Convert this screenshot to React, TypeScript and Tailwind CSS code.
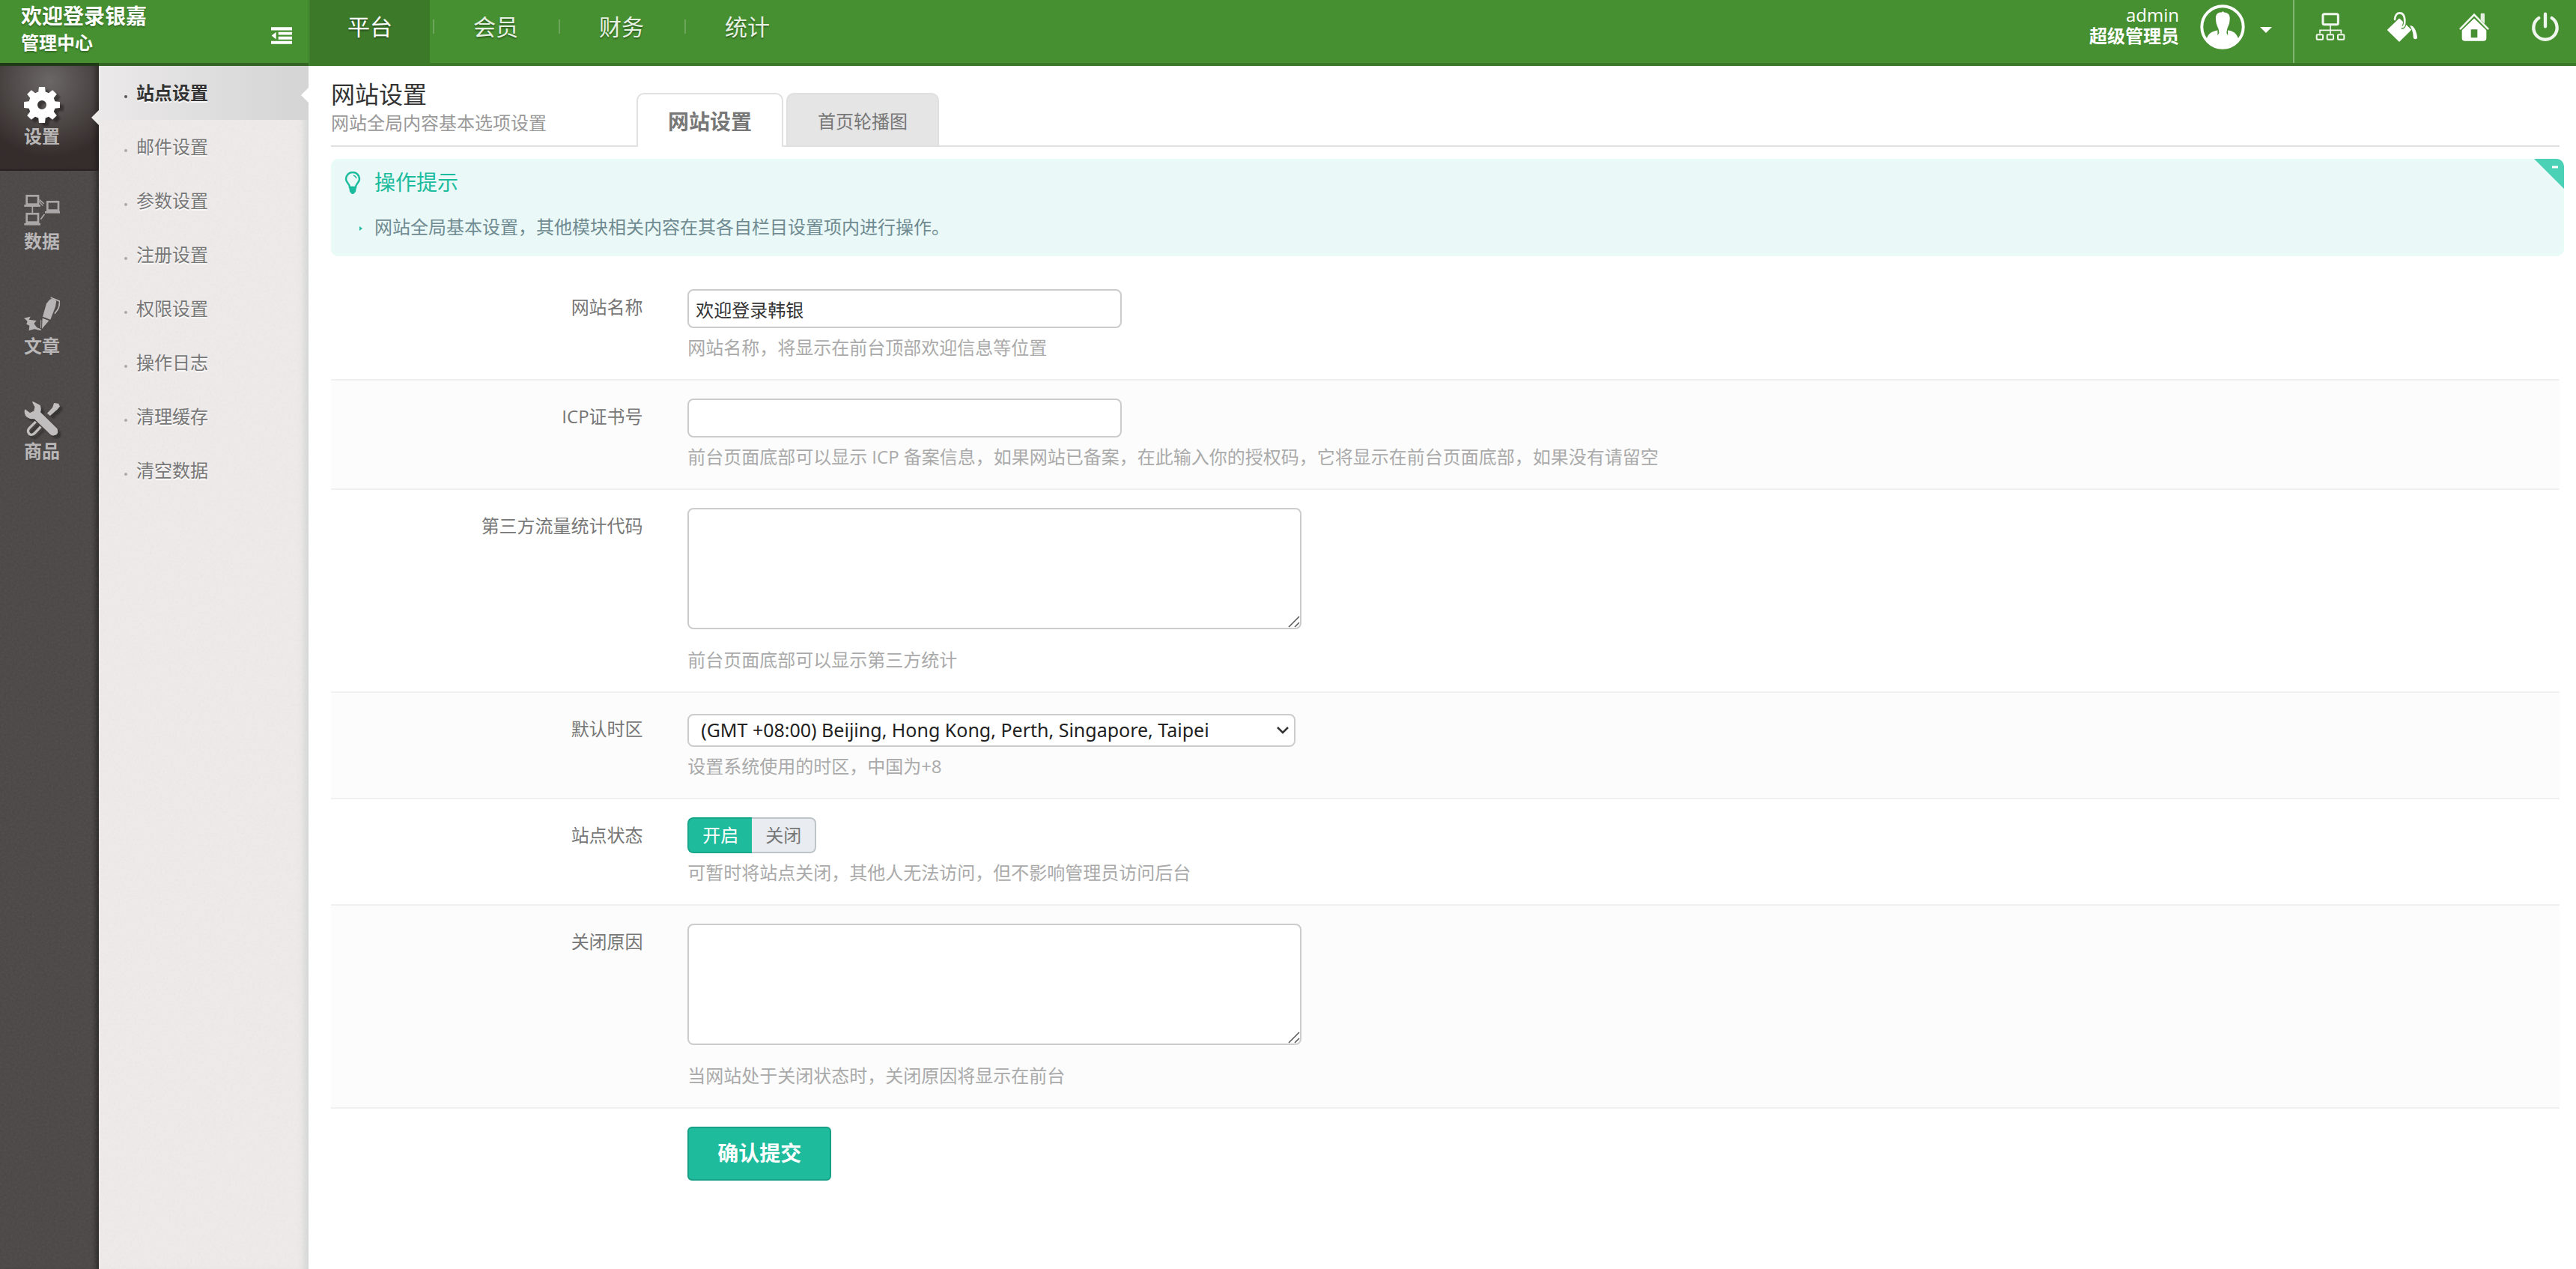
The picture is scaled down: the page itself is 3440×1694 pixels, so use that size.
import { useState } from "react";
import type { ReactNode } from "react";

function CollapseIcon() {
  return (
    <svg viewBox="0 0 84 68" className="h-[23px] w-7" fill="#fff" aria-hidden="true">
      <path d="M0 0H84V13H0ZM29 20H84V31H29ZM29 38H84V50H29ZM0 56H84V68H0ZM2 34L20 20V49Z" />
    </svg>
  );
}

function AvatarIcon() {
  return (
    <svg viewBox="53 17 182 182" className="size-[60px]" aria-hidden="true">
      <clipPath id="avatar-clip">
        <circle cx="144" cy="108" r="80" />
      </clipPath>
      <circle cx="144" cy="108" r="84" fill="none" stroke="#fff" strokeWidth="12" />
      <path
        clipPath="url(#avatar-clip)"
        fill="#fff"
        d="M117 80C114 58 124 48 140 49L146 44L150 49C166 50 176 58 173 80C172 100 165 106 162 120L160 132L166 142L165 122C184 124 200 130 210 160V200H78V160C86 132 104 126 124 122V142L130 132L128 118C124 106 118 98 117 80Z"
      />
    </svg>
  );
}

function SitemapIcon() {
  return (
    <svg viewBox="519 50 120 120" className="size-10" fill="none" stroke="#f2f7f0" aria-hidden="true">
      <rect x="549" y="58" width="61" height="42" rx="6" strokeWidth="9" />
      <path d="M579 103V138M537 136V123H622V136" strokeWidth="5" />
      <rect x="524" y="141" width="25" height="19" rx="3" strokeWidth="6" />
      <rect x="566" y="141" width="25" height="19" rx="3" strokeWidth="6" />
      <rect x="609" y="141" width="25" height="19" rx="3" strokeWidth="6" />
    </svg>
  );
}

function PaintIcon() {
  return (
    <svg viewBox="804 48 120 120" className="size-10" aria-hidden="true">
      <path d="M852 76L898 119L852 165L806 120Z" fill="#fff" stroke="#fff" strokeWidth="4" strokeLinejoin="round" />
      <path d="M833 82C834 58 843 51 854 51C870 51 874 66 874 86C874 100 870 110 861 109" fill="none" stroke="#469031" strokeWidth="14" />
      <path d="M834 78C836 58 844 52 854 52C870 52 874 66 874 86C874 100 870 110 861 107C858 105 859 100 860 96" fill="none" stroke="#f2f7f0" strokeWidth="8" strokeLinecap="round" />
      <path d="M894 103C910 101 920 120 924 148Q925 156 917 157Q908 157 908 147Q908 124 894 103Z" fill="#fff" />
    </svg>
  );
}

function HomeIcon() {
  return (
    <svg viewBox="1092 52 120 120" className="size-10" aria-hidden="true">
      <rect x="1178" y="57" width="16" height="46" rx="3" fill="#e4efe0" />
      <path d="M1103 121L1152 76L1201 121V156Q1201 168 1189 168H1115Q1103 168 1103 156ZM1139 122V155H1165V122Z" fill="#fff" fillRule="evenodd" />
      <path d="M1094 124L1152 68L1210 124" fill="none" stroke="#469031" strokeWidth="14" />
      <path d="M1097 119L1152 63L1207 119" fill="none" stroke="#f2f7f0" strokeWidth="8" strokeLinecap="round" />
    </svg>
  );
}

function PowerIcon() {
  return (
    <svg viewBox="1380 52 120 120" className="size-10" fill="none" stroke="#eff6ed" strokeWidth="13" strokeLinecap="round" aria-hidden="true">
      <path d="M1414 76A47 47 0 1 0 1466 76M1440 60V110" />
    </svg>
  );
}

function GearIcon() {
  return (
    <svg viewBox="0 0 48 48" className="size-12 drop-shadow-[5px_4px_1px_rgba(0,0,0,0.35)]" aria-hidden="true">
      <circle cx="24" cy="24" r="12" fill="none" stroke="#fff" strokeWidth="12" />
      <g fill="#fff">
        {[0, 45, 90, 135, 180, 225, 270, 315].map((a) => (
          <path key={a} d="M20 0H28L29 9H19Z" transform={`rotate(${a} 24 24)`} />
        ))}
      </g>
    </svg>
  );
}

function DataIcon() {
  return (
    <svg viewBox="96 774 144 144" className="size-12" fill="none" stroke="#a9a7a7" strokeWidth="8" aria-hidden="true">
      <rect x="107" y="790" width="46" height="34" />
      <rect x="190" y="814" width="44" height="34" />
      <rect x="107" y="862" width="46" height="34" />
      <path d="M97 830H162M180 856H241M97 904H162" strokeWidth="8" />
      <path d="M130 834V858M158 806L176 822M163 884L178 864" strokeWidth="5" />
      <path d="M156 812L172 830" strokeWidth="4" />
    </svg>
  );
}

function PenIcon() {
  return (
    <svg viewBox="96 1188 144 144" className="size-12" fill="#b7b5b5" aria-hidden="true">
      <path d="M199 1200Q214 1192 226 1206L222 1228L202 1280L171 1268L186 1216Z" />
      <path d="M170 1274L196 1284L168 1317Z" />
      <path d="M203 1192L238 1206Q240 1224 231 1240L219 1256" fill="none" stroke="#b7b5b5" strokeWidth="5" />
      <path d="M96 1274L122 1268L116 1280L146 1284L136 1296L148 1312L164 1318V1324L138 1318L116 1324L118 1304L106 1298L110 1286Z" />
      <path d="M164 1282V1314" stroke="#b7b5b5" strokeWidth="3" />
    </svg>
  );
}

function ToolsIcon() {
  return (
    <svg viewBox="100 892 146 146" className="size-12 drop-shadow-[4px_4px_1px_rgba(0,0,0,0.3)]" fill="#c0bebe" aria-hidden="true">
      <path d="M222 898L240 900L246 912L236 924L206 950L194 940L216 916Z" />
      <path d="M148 974L120 1002Q112 1012 122 1024Q134 1032 146 1018L168 994" fill="none" stroke="#c0bebe" strokeWidth="10" />
      <path d="M136 894L164 908Q170 920 165 936L234 1004Q240 1026 222 1028Q214 1030 208 1024L142 960Q120 964 108 948Q102 938 105 926L124 940L142 932L146 914Z" stroke="#c0bebe" strokeWidth="4" strokeLinejoin="round" />
    </svg>
  );
}

function BulbIcon() {
  return (
    <svg viewBox="0 0 22 31" className="h-[31px] w-[22px]" fill="none" stroke="#1bbc9d" aria-hidden="true">
      <path d="M7 21C7 16 2 15 2 10A9 9 0 0 1 20 10C20 15 15 16 15 21Z" strokeWidth="2.5" />
      <path d="M12 5Q15 6 16 9" strokeWidth="1.5" />
      <path d="M6 20H16L15 27L12 30H10L7 27Z" fill="#1bbc9d" stroke="none" />
    </svg>
  );
}

/* Fine paper grain shown behind both side menus. */
function Grain({ id }: { id: string }) {
  return (
    <svg className="pointer-events-none absolute inset-0 size-full opacity-[0.08]" aria-hidden="true">
      <filter id={id}>
        <feTurbulence type="fractalNoise" baseFrequency="0.35" numOctaves="2" stitchTiles="stitch" />
        <feColorMatrix type="saturate" values="0" />
      </filter>
      <rect width="100%" height="100%" filter={`url(#${id})`} />
    </svg>
  );
}

const topNav = ["平台", "会员", "财务", "统计"];

const tools = [
  { label: "网站地图", icon: <SitemapIcon /> },
  { label: "风格", icon: <PaintIcon /> },
  { label: "首页", icon: <HomeIcon /> },
  { label: "退出", icon: <PowerIcon /> },
];

const modules = [
  { label: "设置", icon: <GearIcon /> },
  { label: "数据", icon: <DataIcon /> },
  { label: "文章", icon: <PenIcon /> },
  { label: "商品", icon: <ToolsIcon /> },
];

const menu = ["站点设置", "邮件设置", "参数设置", "注册设置", "权限设置", "操作日志", "清理缓存", "清空数据"];

function Header() {
  return (
    <header className="flex h-[88px] bg-[#469031] text-white">
      <div className="flex w-[412px] flex-none flex-col">
        <div className="flex flex-1 justify-between pr-[22px] pl-7 font-bold [text-shadow:0_2px_2px_rgba(0,0,0,0.25)]">
          <div className="pt-0.5">
            <p className="text-[28px] leading-[38px]">欢迎登录银嘉</p>
            <p className="text-2xl leading-[34px]">管理中心</p>
          </div>
          <button type="button" aria-label="收起菜单" className="mt-9 self-start">
            <CollapseIcon />
          </button>
        </div>
        <div className="flex h-1">
          <span className="w-[132px] bg-[#203a18]" />
          <span className="flex-1 bg-[#336424]" />
        </div>
      </div>
      <div className="flex flex-1 justify-between border-l-2 border-[#3f822d]">
        <nav className="flex flex-1 border-b-4 border-[#3b7829]">
          {topNav.map((item, i) => (
            <div key={item} className="flex">
              <a
                href={`#nav-${i}`}
                className={
                  "w-40 pt-3 text-center text-[30px] leading-[48px] [text-shadow:0_2px_2px_rgba(0,0,0,0.35)] " +
                  (i === 0 ? "-mb-1 bg-[#3c7a2a] text-white" : "text-[#e6f0e3]")
                }
              >
                {item}
              </a>
              {i < topNav.length - 1 && <span className="mt-[26px] mr-0.5 ml-1 h-[19px] w-0.5 bg-[#6ba65a]" />}
            </div>
          ))}
        </nav>
        <div className="flex border-b-4 border-[#3b7829]">
          <div className="flex pt-1.5 pr-7">
            <div className="text-right text-2xl leading-7">
              <p>admin</p>
              <p className="font-bold">超级管理员</p>
            </div>
            <button type="button" aria-label="账户菜单" className="ml-7 flex items-center gap-5 self-start">
              <AvatarIcon />
              <svg viewBox="0 0 16 8" className="mt-2 h-2 w-4" fill="#fff" aria-hidden="true">
                <path d="M0 0H16L8 8Z" />
              </svg>
            </button>
          </div>
          <div className="flex border-l-2 border-[#82b474]">
            {tools.map((t) => (
              <a key={t.label} href="#tool" aria-label={t.label} className="flex w-24 justify-center pt-4 last:w-[88px] last:pl-1.5">
                {t.icon}
              </a>
            ))}
          </div>
        </div>
      </div>
    </header>
  );
}

function SideMenus() {
  return (
    <aside className="flex w-[412px] flex-none">
      <nav className="relative w-[132px] bg-[#4a4646] shadow-[inset_-8px_0_6px_-4px_rgba(0,0,0,0.45)]">
        <Grain id="grain-dark" />
        {modules.map((m, i) => (
          <a
            key={m.label}
            href={`#module-${i}`}
            className={
              "relative flex h-[140px] flex-col items-center pt-7 pr-5 text-2xl leading-9 font-bold text-[#b9b7b7] " +
              (i === 0
                ? "border-b-2 border-[#2a2222] bg-[radial-gradient(circle_at_50%_15%,rgba(110,106,105,0.9),rgba(50,42,41,0.9)_75%)] shadow-[inset_-8px_0_6px_-4px_rgba(0,0,0,0.3)]"
                : "")
            }
          >
            {m.icon}
            <span>{m.label}</span>
            {i === 0 && (
              <svg viewBox="0 0 10 20" className="absolute top-[59px] right-0 h-5 w-2.5" fill="#eeebeb" aria-hidden="true">
                <path d="M10 0V20L0 10Z" />
              </svg>
            )}
          </a>
        ))}
      </nav>
      <nav className="relative flex-1 bg-[#efebeb] shadow-[inset_-12px_0_8px_-6px_rgba(200,206,204,0.7)]">
        <Grain id="grain-light" />
        <ul className="relative text-2xl leading-[72px]">
          {menu.map((item, i) => (
            <li key={item}>
              <a
                href={`#menu-${i}`}
                className={
                  "relative flex h-[72px] items-center gap-3 pl-[34px] [text-shadow:0_2px_0_rgba(255,255,255,0.8)] " +
                  (i === 0 ? "bg-linear-to-r from-[#ebe9e9] to-[#d4d4d4] font-bold text-[#333]" : "text-[#777]")
                }
              >
                <span className={"mt-2.5 size-1 rounded-full " + (i === 0 ? "bg-[#555]" : "bg-[#aaa]")} />
                {item}
                {i === 0 && (
                  <svg viewBox="0 0 10 20" className="absolute top-[29px] right-0 h-5 w-2.5" fill="#fff" aria-hidden="true">
                    <path d="M10 0V20L0 10Z" />
                  </svg>
                )}
              </a>
            </li>
          ))}
        </ul>
      </nav>
    </aside>
  );
}

function Row({ label, htmlFor, hint, shaded, children }: { label: string; htmlFor?: string; hint: string; shaded?: boolean; children: ReactNode }) {
  return (
    <div className={"flex border-b-2 border-[#f0f0f0] py-6 " + (shaded ? "bg-[#fcfcfc]" : "bg-white")}>
      <label htmlFor={htmlFor} className="w-[14%] text-right leading-[48px] text-[#777]">
        {label}
      </label>
      <div className="ml-[2%] flex-1">
        {children}
        <p className="mt-2 leading-9 text-[#aaa]">{hint}</p>
      </div>
    </div>
  );
}

function TextArea({ id }: { id: string }) {
  return (
    <div className="relative mb-[23px] w-[820px]">
      <textarea
        id={id}
        className="block h-[162px] w-full rounded-lg border-2 border-[#ccc] bg-white px-2 py-1 text-[#333] [&::-webkit-resizer]:hidden"
      />
      <svg viewBox="0 0 16 16" className="pointer-events-none absolute right-0.5 bottom-0.5 size-4" stroke="#555" strokeWidth="1.5" aria-hidden="true">
        <path d="M1 15L15 1M9 15L15 9" />
      </svg>
    </div>
  );
}

const inputClass = "block h-[52px] w-[580px] rounded-lg border-2 border-[#ccc] bg-white px-[9px] text-[#333]";

function SettingsForm() {
  const [open, setOpen] = useState(true);
  return (
    <form className="mt-5 mr-[22px]" onSubmit={(e) => e.preventDefault()}>
      <Row label="网站名称" htmlFor="site-name" hint="网站名称，将显示在前台顶部欢迎信息等位置">
        <input id="site-name" type="text" defaultValue="欢迎登录韩银" className={inputClass} />
      </Row>
      <Row label="ICP证书号" htmlFor="icp" shaded hint="前台页面底部可以显示 ICP 备案信息，如果网站已备案，在此输入你的授权码，它将显示在前台页面底部，如果没有请留空">
        <input id="icp" type="text" className={inputClass} />
      </Row>
      <Row label="第三方流量统计代码" htmlFor="stats" hint="前台页面底部可以显示第三方统计">
        <TextArea id="stats" />
      </Row>
      <Row label="默认时区" htmlFor="timezone" shaded hint="设置系统使用的时区，中国为+8">
        <div className="relative w-[812px] pt-1">
          <select id="timezone" className="block h-11 w-full appearance-none rounded-lg border-2 border-[#ccc] bg-white pl-4 font-['Noto_Sans',sans-serif] text-[25px] text-[#222]">
            <option>(GMT +08:00) Beijing, Hong Kong, Perth, Singapore, Taipei</option>
          </select>
          <svg viewBox="0 0 18 12" className="pointer-events-none absolute right-2 bottom-4 h-3 w-[18px]" fill="none" stroke="#333" strokeWidth="2.5" aria-hidden="true">
            <path d="M2 2L9 9L16 2" />
          </svg>
        </div>
      </Row>
      <Row label="站点状态" hint="可暂时将站点关闭，其他人无法访问，但不影响管理员访问后台">
        <div role="radiogroup" aria-label="站点状态" className="flex leading-[44px]">
          <label className={"relative w-[86px] rounded-l-lg border-2 border-r-0 text-center " + (open ? "border-[#18a78b] bg-[#1ebc9d] text-white" : "border-[#bec5c9] bg-[#e9edf1] text-[#777]")}>
            <input type="radio" name="status" checked={open} onChange={() => setOpen(true)} className="sr-only" />
            开启
          </label>
          <label className={"relative w-[86px] rounded-r-lg border-2 border-l-0 text-center " + (open ? "border-[#bec5c9] bg-[#e9edf1] text-[#777]" : "border-[#18a78b] bg-[#1ebc9d] text-white")}>
            <input type="radio" name="status" checked={!open} onChange={() => setOpen(false)} className="sr-only" />
            关闭
          </label>
        </div>
      </Row>
      <Row label="关闭原因" htmlFor="reason" shaded hint="当网站处于关闭状态时，关闭原因将显示在前台">
        <TextArea id="reason" />
      </Row>
      <div className="py-6 pl-[16%]">
        <button type="submit" className="h-[72px] w-48 rounded-md border-2 border-[#17a085] bg-[#1ebc9d] text-[28px] font-bold text-white">
          确认提交
        </button>
      </div>
    </form>
  );
}

export default function App() {
  return (
    <div className="flex min-h-screen flex-col bg-white font-['Open_Sans','Noto_Sans_CJK_SC',sans-serif] text-2xl">
      <Header />
      <div className="flex flex-1">
        <SideMenus />
        <main className="min-w-0 flex-1 pl-[30px]">
          <div className="mr-[22px] flex h-[108px] border-b-2 border-[#e0e0e0]">
            <div className="w-[408px] pt-[18px]">
              <h1 className="text-[32px] leading-10 text-[#333]">网站设置</h1>
              <p className="leading-9 text-[#999]">网站全局内容基本选项设置</p>
            </div>
            <nav className="-mb-0.5 flex items-stretch gap-1 pt-9 leading-[72px] text-[#777]">
              <a href="#site" aria-current="page" className="rounded-t-[10px] border-2 border-b-0 border-[#e0e0e0] bg-white px-10 text-[28px] font-bold">
                网站设置
              </a>
              <a href="#banner" className="rounded-t-[10px] border-2 border-[#e0e0e0] bg-[#e5e5e5] px-10">
                首页轮播图
              </a>
            </nav>
          </div>
          <section className="relative mt-4 mr-4 h-[130px] overflow-hidden rounded-[10px] bg-[#eaf8f7] pt-1 shadow-[inset_0_0_0_4px_#e8fbf6]">
            <div className="flex h-14 items-center gap-[18px] pl-[18px] text-[28px] text-[#1bbc9d]">
              <BulbIcon />
              <h2>操作提示</h2>
            </div>
            <ul className="text-[#6f8b91]">
              <li className="flex items-center gap-4 pt-2.5 pl-[38px] leading-[42px]">
                <svg viewBox="0 0 4 6" className="mt-1 h-1.5 w-1" fill="#1bbc9d" aria-hidden="true">
                  <path d="M0 0L4 3L0 6Z" />
                </svg>
                网站全局基本设置，其他模块相关内容在其各自栏目设置项内进行操作。
              </li>
            </ul>
            <button type="button" aria-label="收起提示" className="absolute top-0 right-0">
              <svg viewBox="0 0 40 40" className="block size-10" aria-hidden="true">
                <path d="M0 0H40V40Z" fill="#4bd1b5" />
                <path d="M24 11H32" stroke="#fff" strokeWidth="3" />
              </svg>
            </button>
          </section>
          <SettingsForm />
        </main>
      </div>
    </div>
  );
}
